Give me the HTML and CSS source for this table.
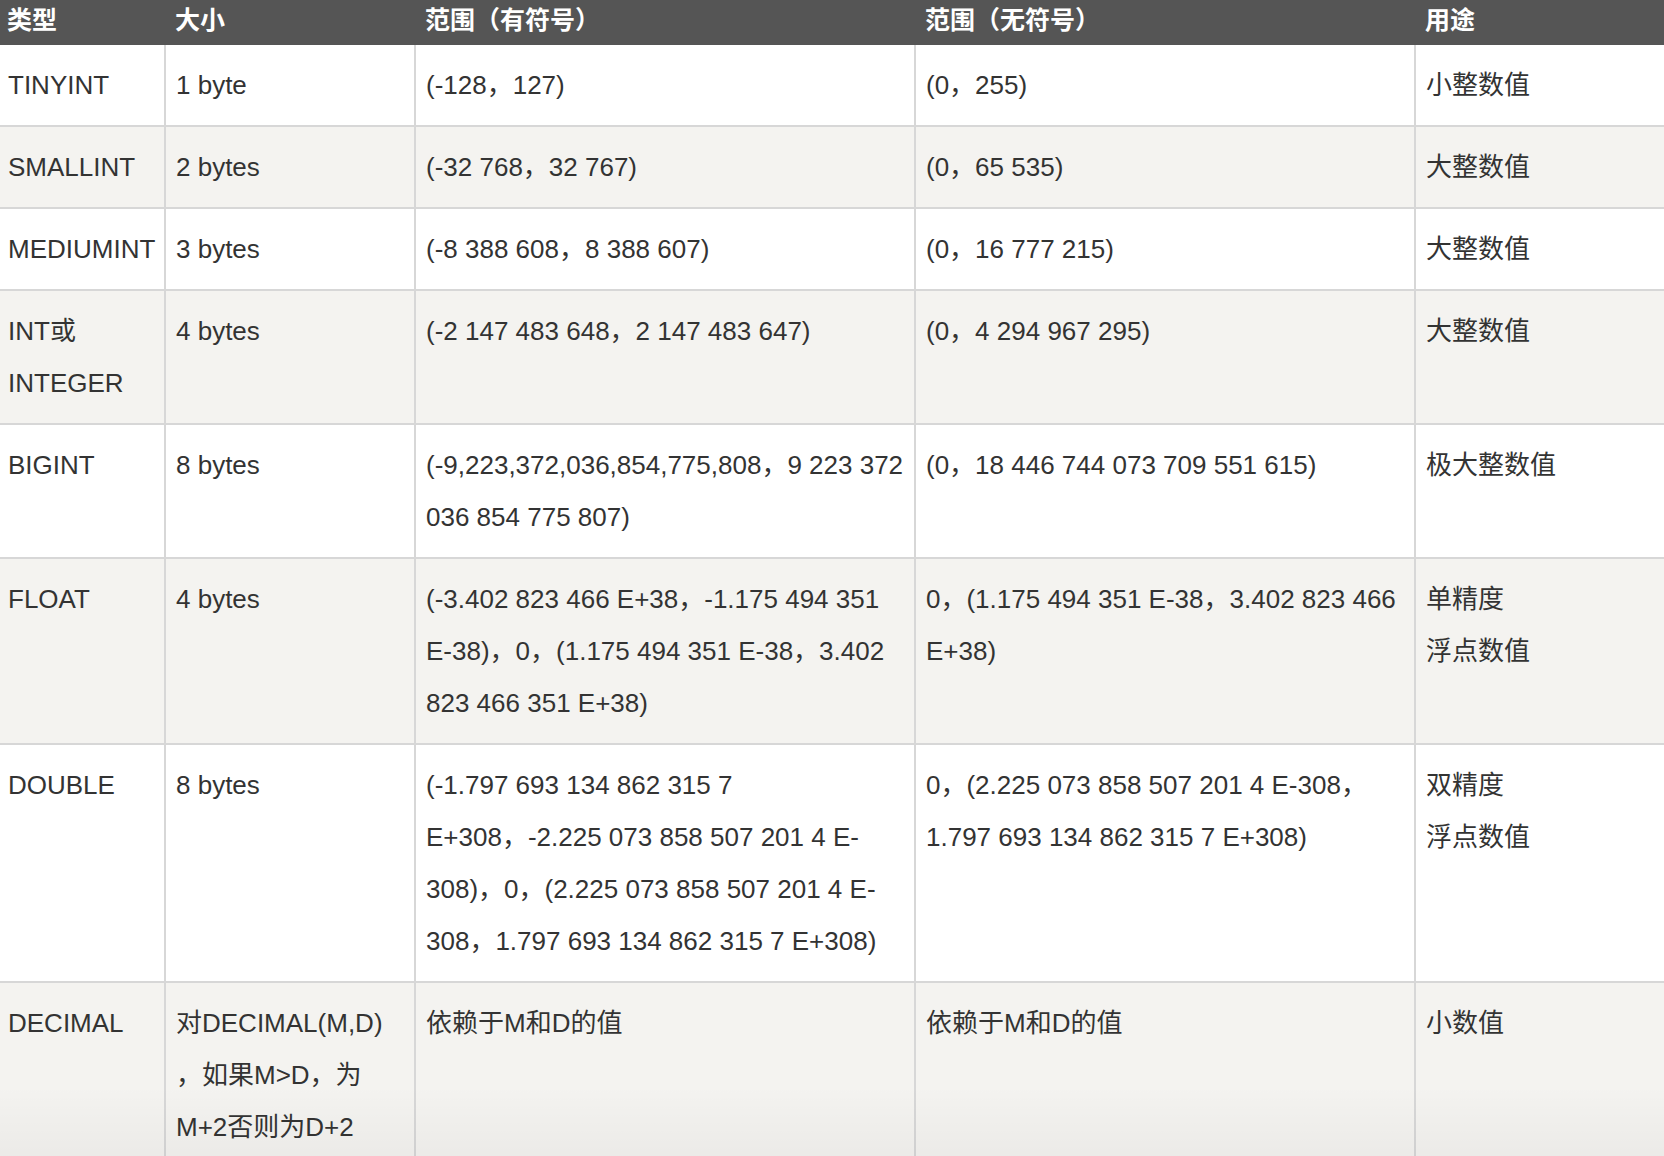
FILE: index.html
```html
<!DOCTYPE html>
<html lang="zh">
<head>
<meta charset="utf-8">
<title>MySQL 数值类型</title>
<link rel="stylesheet" href="styles.css">
</head>
<body>
<div class="page">
<table class="types">
  <colgroup>
    <col class="c1"><col class="c2"><col class="c3"><col class="c4"><col class="c5">
  </colgroup>
  <thead>
    <tr><th>类型</th><th>大小</th><th>范围（有符号）</th><th>范围（无符号）</th><th>用途</th></tr>
  </thead>
  <tbody>
    <tr><td>TINYINT</td><td>1 byte</td><td>(-128，127)</td><td>(0，255)</td><td>小整数值</td></tr>
    <tr><td>SMALLINT</td><td>2 bytes</td><td>(-32 768，32 767)</td><td>(0，65 535)</td><td>大整数值</td></tr>
    <tr><td>MEDIUMINT</td><td>3 bytes</td><td>(-8 388 608，8 388 607)</td><td>(0，16 777 215)</td><td>大整数值</td></tr>
    <tr><td>INT或<br>INTEGER</td><td>4 bytes</td><td>(-2 147 483 648，2 147 483 647)</td><td>(0，4 294 967 295)</td><td>大整数值</td></tr>
    <tr><td>BIGINT</td><td>8 bytes</td><td>(-9,223,372,036,854,775,808，9 223 372<br>036 854 775 807)</td><td>(0，18 446 744 073 709 551 615)</td><td>极大整数值</td></tr>
    <tr><td>FLOAT</td><td>4 bytes</td><td>(-3.402 823 466 E+38，-1.175 494 351<br>E-38)，0，(1.175 494 351 E-38，3.402<br>823 466 351 E+38)</td><td>0，(1.175 494 351 E-38，3.402 823 466<br>E+38)</td><td>单精度<br>浮点数值</td></tr>
    <tr><td>DOUBLE</td><td>8 bytes</td><td>(-1.797 693 134 862 315 7<br>E+308，-2.225 073 858 507 201 4 E-<br>308)，0，(2.225 073 858 507 201 4 E-<br>308，1.797 693 134 862 315 7 E+308)</td><td>0，(2.225 073 858 507 201 4 E-308，<br>1.797 693 134 862 315 7 E+308)</td><td>双精度<br>浮点数值</td></tr>
    <tr><td>DECIMAL</td><td>对DECIMAL(M,D)<br>，如果M&gt;D，为<br>M+2否则为D+2</td><td>依赖于M和D的值</td><td>依赖于M和D的值</td><td>小数值</td></tr>
  </tbody>
</table>
<div class="fade"></div>
</div>
</body>
</html>
```

FILE: styles.css
```css
html, body {
  margin: 0;
  padding: 0;
  background: #ffffff;
}
body {
  width: 1664px;
  height: 1156px;
  overflow: hidden;
  font-family: "Liberation Sans", "Noto Sans CJK SC", sans-serif;
  color: #333333;
}
.page {
  position: relative;
  width: 1664px;
  height: 1156px;
  overflow: hidden;
}
.types {
  width: 1664px;
  table-layout: fixed;
  border-collapse: collapse;
  font-size: 26px;
}
.c1 { width: 165px; }
.c2 { width: 250px; }
.c3 { width: 500px; }
.c4 { width: 500px; }
.c5 { width: 249px; }

.types th {
  box-sizing: border-box;
  background: #555555;
  color: #ffffff;
  font-weight: bold;
  text-align: left;
  height: 45px;
  line-height: 40px;
  padding: 0 10px 5px;
  border: none;
  white-space: nowrap;
  font-size: 25px;
}
.types th:first-child { padding-left: 7px; }

.types td {
  padding: 14px 10px;
  line-height: 52px;
  vertical-align: top;
  white-space: nowrap;
  border-left: 2px solid #d7d7d7;
  border-right: 2px solid #d7d7d7;
  border-bottom: 2px solid #d7d7d7;
  border-top: none;
}
.types td:first-child { padding-left: 8px; border-left: none; }
.types td:last-child { border-right: none; }
.types tbody tr:nth-child(even) td { background: #f4f3f0; }

.fade {
  position: absolute;
  left: 0;
  right: 0;
  bottom: 0;
  height: 70px;
  background: linear-gradient(to bottom, rgba(0,0,0,0), rgba(0,0,0,0.035));
  pointer-events: none;
}
```
